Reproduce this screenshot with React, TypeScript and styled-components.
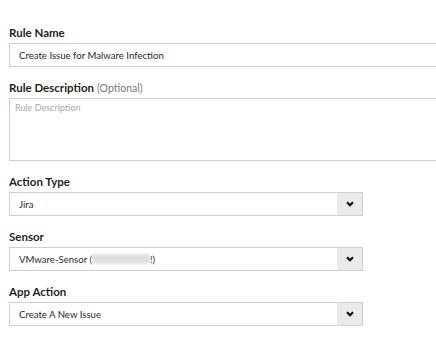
import React from "react";
import styled, { createGlobalStyle } from "styled-components";

const GlobalStyle = createGlobalStyle`
  html, body {
    margin: 0;
    padding: 0;
    background: #ffffff;
    overflow: hidden;
  }
  body {
    font-family: Lato, "Open Sans", "Liberation Sans", sans-serif;
  }
`;

const Form = styled.div`
  width: 470px;
  padding: 25px 0 0 9px;
  box-sizing: border-box;
`;

const Field = styled.div`
  display: flex;
  flex-direction: column;
  margin-bottom: 13px;
`;

const Label = styled.div`
  height: 15px;
  font-size: 11.5px;
  font-weight: 700;
  line-height: 15px;
  color: #1f1f1f;
  margin-bottom: 3px;
  white-space: nowrap;
`;

const Optional = styled.span`
  font-weight: 400;
  color: #7a7a7a;
  font-size: 10.5px;
  line-height: 15px;
  margin-left: 3px;
`;

const TextBox = styled.div`
  height: 24px;
  border: 1px solid #cfcfcf;
  box-sizing: border-box;
  padding: 0 9px;
  display: flex;
  align-items: center;
  font-size: 9.6px;
  color: #2a2a2a;
`;

const TextArea = styled.div`
  height: 63px;
  border: 1px solid #cfcfcf;
  box-sizing: border-box;
  padding: 3px 5px;
  font-size: 9px;
  color: #a8a8a8;
`;

const Select = styled.div`
  width: 354px;
  height: 24px;
  border: 1px solid #cfcfcf;
  box-sizing: border-box;
  display: flex;
  align-items: stretch;
`;

const SelectValue = styled.div`
  flex: 1;
  padding: 0 9px;
  display: flex;
  align-items: center;
  font-size: 9.6px;
  color: #2a2a2a;
`;

const SelectButton = styled.div`
  width: 25px;
  background: #e9eaeb;
  display: flex;
  align-items: center;
  justify-content: center;
`;

const Redacted = styled.span`
  display: inline-block;
  width: 58px;
  height: 10px;
  background: #dedede;
  filter: blur(1.5px);
  vertical-align: middle;
`;

const Chevron = () => (
  <svg width="8" height="6" viewBox="0 0 8 6">
    <path d="M1 1.2 L4 4.2 L7 1.2" fill="none" stroke="#111" strokeWidth="2.2" />
  </svg>
);

const Dropdown = ({ children }: { children: React.ReactNode }) => (
  <Select>
    <SelectValue>{children}</SelectValue>
    <SelectButton>
      <Chevron />
    </SelectButton>
  </Select>
);

export default function App() {
  return (
    <>
      <GlobalStyle />
      <Form>
        <Field>
          <Label>Rule Name</Label>
          <TextBox>Create Issue for Malware Infection</TextBox>
        </Field>
        <Field>
          <Label>
            Rule Description<Optional>(Optional)</Optional>
          </Label>
          <TextArea>Rule Description</TextArea>
        </Field>
        <Field>
          <Label>Action Type</Label>
          <Dropdown>Jira</Dropdown>
        </Field>
        <Field>
          <Label>Sensor</Label>
          <Dropdown>
            VMware-Sensor (<Redacted />!)
          </Dropdown>
        </Field>
        <Field>
          <Label>App Action</Label>
          <Dropdown>Create A New Issue</Dropdown>
        </Field>
      </Form>
    </>
  );
}
